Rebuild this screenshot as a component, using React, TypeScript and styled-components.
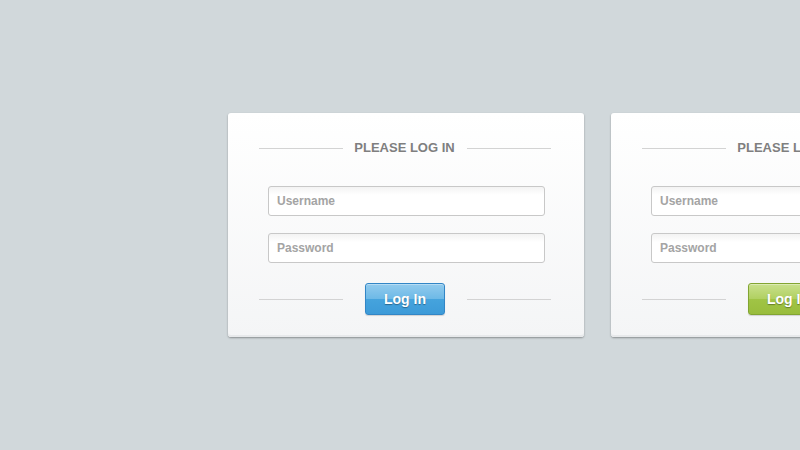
import React from "react";
import styled, { createGlobalStyle } from "styled-components";

const Global = createGlobalStyle`
  html, body { margin: 0; padding: 0; }
  body {
    background: #d1d8db;
    font-family: "Liberation Sans", Arial, Helvetica, sans-serif;
  }
`;

const Stage = styled.div`
  width: 800px;
  height: 450px;
  overflow: hidden;
  display: flex;
  gap: 27px;
  padding: 113px 0 0 228px;
  box-sizing: border-box;
`;

const Card = styled.div`
  flex: 0 0 356px;
  height: 224px;
  box-sizing: border-box;
  padding: 25px 33px 0 31px;
  display: flex;
  flex-direction: column;
  border-radius: 3px;
  background: linear-gradient(#ffffff, #f4f5f6);
  box-shadow: inset 0 -2px 0 #e7e9eb, 0 1px 2px rgba(0, 0, 0, 0.35);
`;

const Divider = styled.div<{ $h: number }>`
  display: flex;
  align-items: center;
  height: ${(p) => p.$h}px;
`;

const Rule = styled.div`
  flex: 1;
  height: 1px;
  background: #d3d3d3;
`;

const Title = styled.div`
  font-size: 13px;
  font-weight: bold;
  color: #7f7f7f;
  padding: 0 12px 0 11px;
  line-height: 20px;
  white-space: nowrap;
`;

const Fields = styled.div`
  display: flex;
  flex-direction: column;
  gap: 17px;
  margin: 28px 6px 20px 9px;
`;

const Field = styled.input`
  height: 30px;
  box-sizing: border-box;
  border: 1px solid #c8c8c8;
  border-radius: 3px;
  padding: 0 8px;
  font-family: inherit;
  font-size: 12px;
  font-weight: bold;
  color: #555;
  background: linear-gradient(#f3f3f3, #ffffff 8px);
  outline: none;
  &::placeholder {
    color: #a4a4a4;
  }
`;

const Button = styled.button<{ $tone: "blue" | "green" }>`
  width: 80px;
  height: 32px;
  margin: 0 22px;
  border-radius: 3px;
  font-family: inherit;
  font-size: 14px;
  font-weight: bold;
  color: #fff;
  cursor: pointer;
  padding: 0;
  text-shadow: 0 1px 1px rgba(0, 0, 0, 0.35);
  border: 1px solid ${(p) => (p.$tone === "blue" ? "#3286c6" : "#82a532")};
  background: ${(p) =>
    p.$tone === "blue"
      ? "linear-gradient(#92cbee, #6db9e6 50%, #45a3dd 50%, #3d9bd8)"
      : "linear-gradient(#c9e08c, #b0d061 50%, #a0c445 50%, #99bd3d)"};
  box-shadow: inset 0 1px 0 rgba(255, 255, 255, 0.35), 0 1px 1px rgba(0, 0, 0, 0.15);
`;

const LoginCard = ({ tone }: { tone: "blue" | "green" }) => (
  <Card>
    <Divider $h={20}>
      <Rule />
      <Title>PLEASE LOG IN</Title>
      <Rule />
    </Divider>
    <Fields>
      <Field placeholder="Username" />
      <Field placeholder="Password" type="password" />
    </Fields>
    <Divider $h={32}>
      <Rule />
      <Button $tone={tone}>Log In</Button>
      <Rule />
    </Divider>
  </Card>
);

export default function App() {
  return (
    <>
      <Global />
      <Stage>
        <LoginCard tone="blue" />
        <LoginCard tone="green" />
      </Stage>
    </>
  );
}
